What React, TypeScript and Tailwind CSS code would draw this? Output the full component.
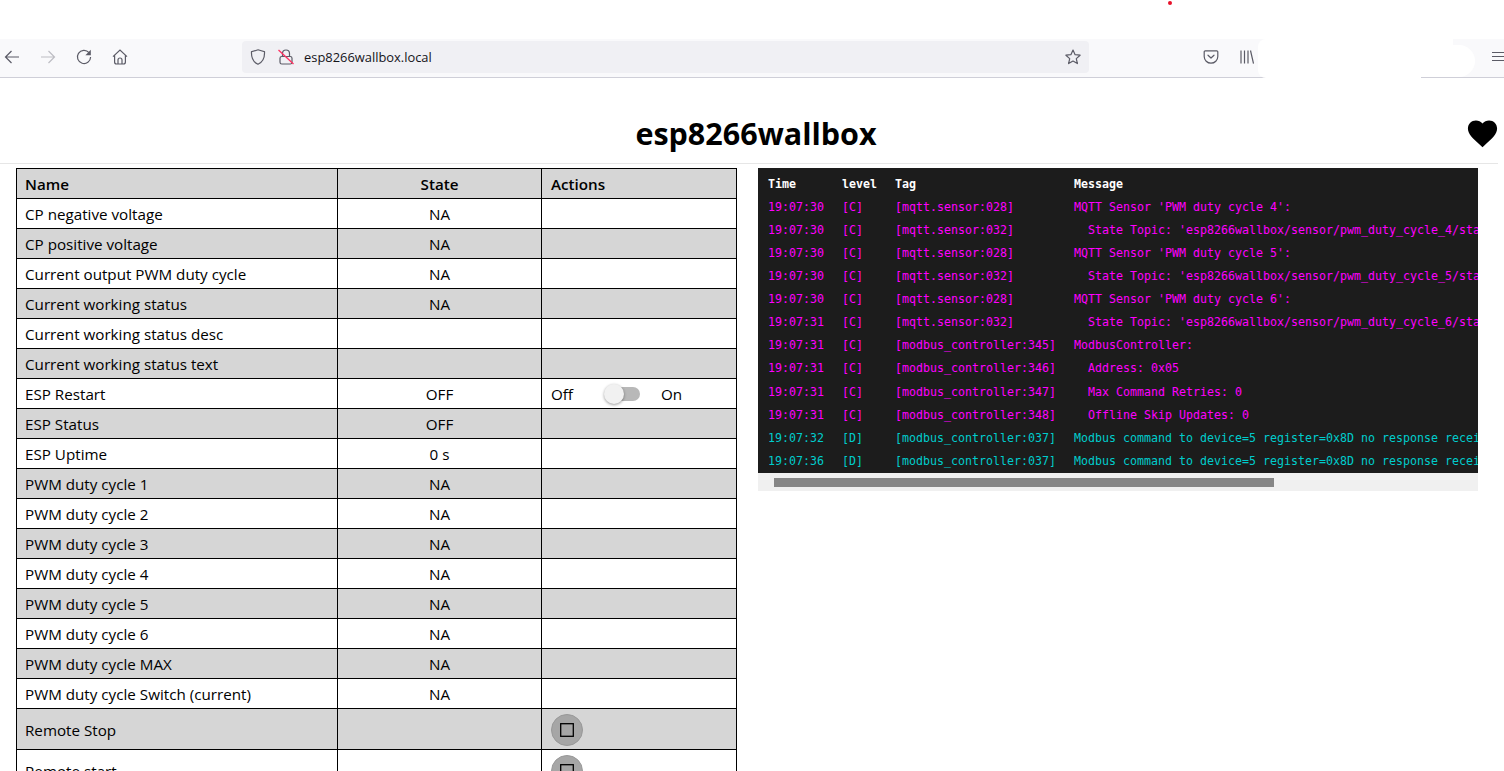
const sans = "font-['Open_Sans','Noto_Sans',sans-serif]";

type Row = { name: string; state?: string; action?: "switch" | "button" };
const rows: Row[] = [
  { name: "CP negative voltage", state: "NA" },
  { name: "CP positive voltage", state: "NA" },
  { name: "Current output PWM duty cycle", state: "NA" },
  { name: "Current working status", state: "NA" },
  { name: "Current working status desc" },
  { name: "Current working status text" },
  { name: "ESP Restart", state: "OFF", action: "switch" },
  { name: "ESP Status", state: "OFF" },
  { name: "ESP Uptime", state: "0 s" },
  { name: "PWM duty cycle 1", state: "NA" },
  { name: "PWM duty cycle 2", state: "NA" },
  { name: "PWM duty cycle 3", state: "NA" },
  { name: "PWM duty cycle 4", state: "NA" },
  { name: "PWM duty cycle 5", state: "NA" },
  { name: "PWM duty cycle 6", state: "NA" },
  { name: "PWM duty cycle MAX", state: "NA" },
  { name: "PWM duty cycle Switch (current)", state: "NA" },
  { name: "Remote Stop", action: "button" },
  { name: "Remote start", action: "button" },
];

const M = "text-[#ff00ff]";
const C = "text-[#00cccc]";
const logs: [string, string, string, string, string][] = [
  ["19:07:30", "[C]", "[mqtt.sensor:028]", "MQTT Sensor 'PWM duty cycle 4':", M],
  ["19:07:30", "[C]", "[mqtt.sensor:032]", "  State Topic: 'esp8266wallbox/sensor/pwm_duty_cycle_4/state'", M],
  ["19:07:30", "[C]", "[mqtt.sensor:028]", "MQTT Sensor 'PWM duty cycle 5':", M],
  ["19:07:30", "[C]", "[mqtt.sensor:032]", "  State Topic: 'esp8266wallbox/sensor/pwm_duty_cycle_5/state'", M],
  ["19:07:30", "[C]", "[mqtt.sensor:028]", "MQTT Sensor 'PWM duty cycle 6':", M],
  ["19:07:31", "[C]", "[mqtt.sensor:032]", "  State Topic: 'esp8266wallbox/sensor/pwm_duty_cycle_6/state'", M],
  ["19:07:31", "[C]", "[modbus_controller:345]", "ModbusController:", M],
  ["19:07:31", "[C]", "[modbus_controller:346]", "  Address: 0x05", M],
  ["19:07:31", "[C]", "[modbus_controller:347]", "  Max Command Retries: 0", M],
  ["19:07:31", "[C]", "[modbus_controller:348]", "  Offline Skip Updates: 0", M],
  ["19:07:32", "[D]", "[modbus_controller:037]", "Modbus command to device=5 register=0x8D no response received - removed from send queue", C],
  ["19:07:36", "[D]", "[modbus_controller:037]", "Modbus command to device=5 register=0x8D no response received - removed from send queue", C],
];

const G = "#5b5b66";

function Ico({ w = 16, children }: { w?: number; children: React.ReactNode }) {
  return (
    <svg width={w} height="16" viewBox={`0 0 ${w} 16`} fill="none" stroke={G} strokeWidth="1.2" className="shrink-0">
      {children}
    </svg>
  );
}

function Browser() {
  return (
    <div className="relative mt-[39px] h-[39px] bg-[#f9f9fb] border-b border-[#cfcfd8] flex items-center pl-[4px] pb-[2px]">
      <Ico><path d="M15 8H1.500M7.500 2 1.500 8l6 6" /></Ico>
      <span className="ml-[20px] flex">
        <svg width="16" height="16" viewBox="0 0 16 16" fill="none" stroke="#bdbdc3" strokeWidth="1.2" className="shrink-0">
          <path d="M1 8h13.500M8.500 2l6 6-6 6" />
        </svg>
      </span>
      <span className="ml-[20px] flex">
        <Ico>
          <path d="M13 3.600A6.600 6.600 0 1 0 14.600 8" />
          <path d="M14.800 0.800v5.400H9.400z" fill={G} stroke="none" />
        </Ico>
      </span>
      <span className="ml-[20px] flex">
        <Ico>
          <path d="M1 7.600 8 1l7 6.600M2.600 6.400V13a2 2 0 0 0 2 2h6.800a2 2 0 0 0 2-2V6.400" />
          <path d="M6 15v-4a2 2 0 0 1 4 0v4" />
        </Ico>
      </span>
      <div className="ml-[114px] w-[847px] h-[32px] bg-[#f0f0f4] rounded-[4px] flex items-center pl-[8px] pr-[8px]">
        <Ico><path d="M8 .8 14.500 2.800c.3 5.400-1 10-6.500 12.500C2.500 12.800 1.200 8.200 1.500 2.800z" /></Ico>
        <span className="ml-[12px] flex">
          <Ico>
            <path d="M4.500 7.500V4.500a3.500 3.500 0 0 1 7 0V7.500" />
            <rect x="2" y="7.500" width="12" height="7.500" rx="1.800" />
            <path d="M.5 1 15.500 15" stroke="#ff3060" strokeWidth="1.300" />
          </Ico>
        </span>
        <span className={`ml-[10px] mt-[2px] text-[12.900px] text-[#15141a] ${sans}`}>esp8266wallbox.local</span>
        <span className="ml-auto flex">
          <Ico><path d="M8 1l2.100 4.700 5 .5-3.800 3.400 1.100 5L8 12l-4.400 2.600 1.100-5L.9 6.200l5-.5z" strokeLinejoin="round" /></Ico>
        </span>
      </div>
      <span className="ml-[114px] flex">
        <Ico>
          <path d="M2.200 1.800h11.600a1 1 0 0 1 1 1v4.600a6.800 6.800 0 0 1-13.600 0V2.800a1 1 0 0 1 1-1Z" />
          <path d="M5 6.200 8 9l3-2.800" strokeLinecap="round" strokeLinejoin="round" />
        </Ico>
      </span>
      <span className="ml-[21px] flex">
        <Ico w={14}><path d="M1 1.500v13M4.500 1.500v13M8 1.500v13M10.500 1.500l3 13" /></Ico>
      </span>
      <span className="ml-auto flex">
        <Ico w={12}><path d="M0 3.500h12M0 7.500h12M0 11.500h12" /></Ico>
      </span>
      {/* white blob that hides the toolbar's extension icons */}
      <div className="absolute left-[1258px] top-0 w-[163px] h-[39px] bg-white rounded-l-[8px]" />
      <div className="absolute left-[1421px] top-0 w-[32px] h-[38px] bg-white" />
      <div className="absolute left-[1440px] top-[6px] w-[35px] h-[32px] bg-white rounded-r-[16px]" />
    </div>
  );
}

function Toggle() {
  return (
    <div className="flex items-center h-full">
      <span>Off</span>
      <span className="relative ml-[33px] w-[34px] h-[14px] rounded-full bg-[#b8b8b8]">
        <span className="absolute left-[-2px] top-[-3px] w-[20px] h-[20px] rounded-full bg-[#f1f1f1] shadow-[0_1px_3px_rgba(0,0,0,0.4)]" />
      </span>
      <span className="ml-[21px]">On</span>
    </div>
  );
}

function RoundButton() {
  return (
    <div className="w-[32px] h-[32px] rounded-full bg-[#a6a6a6] border border-[#999] flex items-center justify-center">
      <svg width="14" height="14" viewBox="0 0 14 14" fill="none" stroke="#000" strokeWidth="1.300">
        <rect x="0.700" y="0.700" width="12.600" height="12.600" />
      </svg>
    </div>
  );
}

export default function App() {
  return (
    <div className={`relative h-[771px] w-[1504px] overflow-hidden bg-white text-black ${sans}`}>
      <div className="absolute left-[1168px] top-[1px] w-[4px] h-[4px] rounded-full bg-[#e8102a]" />
      <Browser />
      <header className="relative h-[86px] mr-[6px] border-b border-[#e6e6e6] flex items-center justify-center">
        <h1 className="text-[30.500px] font-bold leading-none mt-[25px] mr-[-14px]">esp8266wallbox</h1>
        <svg viewBox="0 0 24 24" className="absolute left-[1465px] top-[38px] w-[35px] h-[35px]" fill="#000">
          <path d="M12 21.35l-1.450-1.320C5.400 15.360 2 12.280 2 8.500 2 5.420 4.420 3 7.500 3c1.740 0 3.410.810 4.500 2.090C13.090 3.810 14.760 3 16.500 3 19.580 3 22 5.420 22 8.500c0 3.780-3.400 6.860-8.550 11.540L12 21.350z" />
        </svg>
      </header>
      <main className="flex items-start pl-[16px] pt-[4px]">
        <table className="w-[720px] table-fixed border-collapse text-[15.200px] border border-black">
          <colgroup>
            <col className="w-[321px]" />
            <col className="w-[204px]" />
            <col className="w-[195px]" />
          </colgroup>
          <thead>
            <tr className="h-[30px] bg-[#d6d6d6]">
              <th className="border border-black text-left font-semibold pl-[8px] pt-[2px]">Name</th>
              <th className="border border-black text-center font-semibold pt-[2px]">State</th>
              <th className="border border-black text-left font-semibold pl-[9px] pt-[2px]">Actions</th>
            </tr>
          </thead>
          <tbody>
            {rows.map((r, i) => (
              <tr key={r.name} className={`${r.action === "button" ? "h-[41px]" : "h-[30px]"} ${i % 2 === 1 || r.name === "Remote Stop" ? "bg-[#d6d6d6]" : "bg-white"}`}>
                <td className="border border-black pl-[8px] pt-[2px]">{r.name}</td>
                <td className="border border-black text-center pt-[2px]">{r.state}</td>
                <td className="border border-black pl-[9px] pt-[2px]">
                  {r.action === "switch" && <Toggle />}
                  {r.action === "button" && <RoundButton />}
                </td>
              </tr>
            ))}
          </tbody>
        </table>
        <section className="ml-[21px] w-[720px]">
          <div className="h-[305px] bg-[#1c1c1c] overflow-hidden pl-[10px] pt-[5px] font-['DejaVu_Sans_Mono',monospace] text-[11.630px] whitespace-pre">
            <div className="flex h-[23.080px] items-center font-bold text-white">
              <span className="w-[74px]">Time</span>
              <span className="w-[53px]">level</span>
              <span className="w-[179px]">Tag</span>
              <span>Message</span>
            </div>
            {logs.map((l, i) => (
              <div key={i} className={`flex h-[23.080px] items-center ${l[4]}`}>
                <span className="w-[74px] shrink-0">{l[0]}</span>
                <span className="w-[53px] shrink-0">{l[1]}</span>
                <span className="w-[179px] shrink-0">{l[2]}</span>
                <span>{l[3]}</span>
              </div>
            ))}
          </div>
          <div className="h-[18px] bg-[#f0f0f0] pl-[16px] pt-[5px]">
            <div className="h-[9px] w-[500px] bg-[#868686]" />
          </div>
        </section>
      </main>
    </div>
  );
}
